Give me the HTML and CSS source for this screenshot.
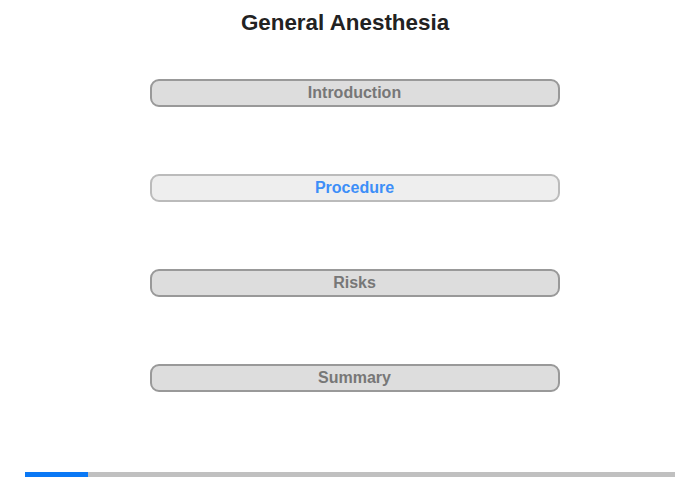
FILE: index.html
```html
<!DOCTYPE html>
<html>
<head>
<meta charset="utf-8">
<link rel="stylesheet" href="styles.css">
</head>
<body>
<div class="page">
  <h1 class="title">General Anesthesia</h1>
  <div class="menu">
    <div class="btn">Introduction</div>
    <div class="btn active">Procedure</div>
    <div class="btn">Risks</div>
    <div class="btn">Summary</div>
  </div>
  <div class="progress"><div class="fill"></div></div>
</div>
</body>
</html>
```
FILE: styles.css
```css
html, body { margin: 0; padding: 0; background: #fff; }
.page {
  width: 700px; height: 480px;
  font-family: "Liberation Sans", Arial, sans-serif;
  display: flex; flex-direction: column; align-items: center;
}
.title {
  margin: 10px 10px 0 0; font-size: 22.4px; font-weight: bold; color: #222;
  line-height: 26px;
}
.menu {
  margin: 43px 0 0 9px;
  display: flex; flex-direction: column; gap: 67px;
}
.btn {
  box-sizing: border-box;
  width: 410px; height: 28px;
  border: 2px solid #999; border-radius: 9px;
  background: #ddd; color: #777;
  font-size: 16px; font-weight: bold;
  display: flex; align-items: center; justify-content: center;
}
.btn.active { background: #eee; border-color: #bbb; color: #3d8ef8; }
.progress {
  margin-top: 80px;
  width: 650px; height: 5px; background: #c0c0c0;
}
.fill { width: 63px; height: 100%; background: #0a78f5; }
```
